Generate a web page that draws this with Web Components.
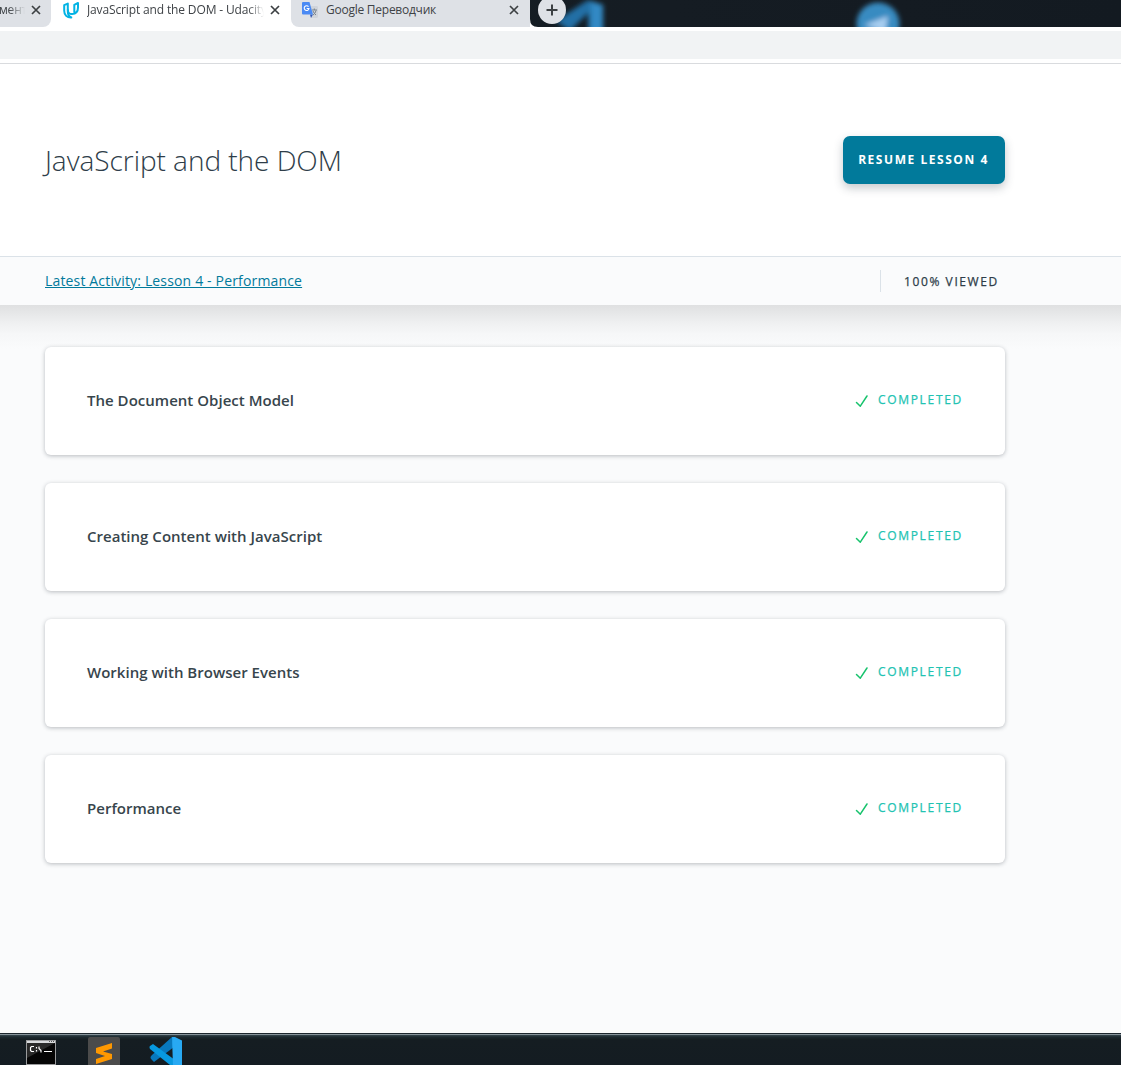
<!DOCTYPE html>
<html lang="en"><head><meta charset="utf-8"><title>JavaScript and the DOM - Udacity</title>
<style>html,body{margin:0;height:100%;overflow:hidden}body{font-family:"Open Sans","Noto Sans",sans-serif;color:#2e3d49}</style></head>
<body>
<desktop-window></desktop-window>
<script>
const define=(name,html)=>customElements.define(name,class extends HTMLElement{
  constructor(){super();this.attachShadow({mode:'open'}).innerHTML=html;}
});

define('browser-tab',`<style>
:host{display:flex;align-items:center;height:27px;box-sizing:border-box;background:#dee1e6;font-size:12px;line-height:20px;color:#3f4347;padding-bottom:7px}
:host([active]){background:#fff}
.icon{flex:none;width:16px;height:20px;display:flex;align-items:center;margin-right:8px}
:host([bare]) .icon{display:none}
.title{flex:1;min-width:0;overflow:hidden;white-space:nowrap;letter-spacing:var(--track,-.25px)}
:host([fade]) .title{-webkit-mask-image:linear-gradient(90deg,#000 calc(100% - 16px),transparent);mask-image:linear-gradient(90deg,#000 calc(100% - 16px),transparent)}
svg.x{flex:none;width:10px;height:10px;margin-left:6px}
</style><span class="icon"><slot name="icon"></slot></span><span class="title"><slot></slot></span>
<svg class="x" viewBox="0 0 10 10"><path d="M1 1l8 8M9 1l-8 8" stroke="#3c4043" stroke-width="1.7"/></svg>`);

define('tab-strip',`<style>
:host{display:flex;height:27px;overflow:hidden;background:linear-gradient(90deg,#141e24,#151c23 60%,#131a21)}
.tabs{display:flex;width:530px;background:#fff;flex:none}
.t1{width:51px;padding-right:10px;border-bottom-right-radius:8px;--track:-.2px}
.t2{width:240px;padding-left:12px;padding-right:11px}
.t3{width:239px;padding-left:11px;padding-right:11px;border-radius:0 0 0 8px}
.art{flex:1;height:27px;min-width:0}
svg{display:block;flex:none}
</style>
<div class="tabs">
<browser-tab class="t1" bare fade><span style="margin-left:-1px">мент</span></browser-tab>
<browser-tab class="t2" active fade style="--track:-.14px"><svg slot="icon" width="16" height="18" viewBox="0 0 16 18"><g fill="none" stroke="#02b3e4" stroke-width="2" stroke-linejoin="round" stroke-linecap="round"><path d="M4.800 10.500V2.600L1.200 4.200V9.800C1.200 14.200 4 16.700 8.300 16.500 6 15.500 4.800 13.500 4.800 10.500"/><path d="M4.800 9c.3 3 1.800 4.200 4.200 4.100 3.800-.2 6-2.600 6-6.500V2L11.300 3.800v7.500"/></g></svg>JavaScript and the DOM - Udacity</browser-tab>
<browser-tab class="t3"><svg slot="icon" width="16" height="16" viewBox="0 0 16 16"><path d="M6 4h9.300l.7.700V15l-1 1H9z" fill="#d0d4da"/><path d="M8 12.500h3L9 16z" fill="#3257b5"/><path d="M10 8h5M12.300 6.500V8M11 9c.6 1.800 1.700 3 3 4M14 8.500c-.6 2.200-1.500 3.500-3 4.500" stroke="#7a848d" stroke-width="1" fill="none"/><path d="M1 0h6.500L11 12.500H1q-1 0-1-1V1q0-1 1-1z" fill="#4a8af4"/><path d="M6.500 4.600A2.400 2.400 0 1 0 7 6.500H4.700" stroke="#fff" stroke-width="1.100" fill="none"/></svg>Google Переводчик</browser-tab>
</div>
<svg class="art" viewBox="530 0 591 27" width="591" height="27"><defs><filter id="b" x="-20%" y="-30%" width="140%" height="160%"><feGaussianBlur stdDeviation="2.5"/></filter></defs>
<path d="M530 19v8h8q-8 0-8-8" fill="#fff"/>
<g filter="url(#b)"><path d="M556 21L588 0l15 5v32h-15V13L570 31z" fill="#236fa6"/><path d="M591 1l12 4v32h-12z" fill="#3389c4"/><circle cx="878" cy="24" r="21.500" fill="#388bc1"/><path d="M864 25l24-9-3 18-8-5z" fill="#a8cef0"/></g>
<circle cx="552" cy="10" r="14" fill="#dee1e6"/><path d="M546.500 10h11M552 4.500v11" stroke="#3c4043" stroke-width="2"/></svg>`);

define('browser-bar',`<style>:host{display:block;box-sizing:border-box;height:37px;background:#f1f3f4;border-top:4px solid #fff;border-bottom:1px solid #d9dbde}
div{height:28px;border-bottom:4px solid #fff}</style><div></div>`);

define('resume-button',`<style>:host{display:block}button{all:unset;box-sizing:border-box;display:flex;align-items:center;justify-content:center;width:162px;height:48px;border-radius:7px;background:#017a9b;color:#fff;font-size:12px;font-weight:700;letter-spacing:1.550px;padding:0 1px 2px 0;white-space:nowrap;box-shadow:0 4px 10px rgba(46,61,73,.28)}</style><button><slot></slot></button>`);

define('course-header',`<style>
:host{display:block;background:#fafbfc}
.hero{height:192px;background:#fff;border-bottom:1px solid #dbe2e8;padding:0 116px 0 45px;display:flex;align-items:center;justify-content:space-between}
h1{font-size:28px;font-weight:300;line-height:40px;margin:0;letter-spacing:-.04px;white-space:nowrap}
.bar{height:48px;display:flex;align-items:center;justify-content:space-between;padding:0 116px 0 45px}
a{font-size:14px;line-height:24px;letter-spacing:.16px;color:#017a9b;text-decoration:underline;white-space:nowrap}
.v{width:125px;box-sizing:border-box;height:22px;border-left:1px solid #dbe2e8;padding-left:23px;font-size:12px;line-height:24px;letter-spacing:1.600px;white-space:nowrap;-webkit-text-stroke:.25px currentColor}
</style><div class="hero"><h1><slot></slot></h1><resume-button>RESUME LESSON 4</resume-button></div>
<div class="bar"><a><slot name="activity"></slot></a><div class="v"><slot name="progress"></slot></div></div>`);

define('lesson-card',`<style>
:host{display:flex;align-items:center;justify-content:space-between;box-sizing:border-box;height:108px;padding:0 42px 0 42px;background:#fff;border-radius:6px;box-shadow:0 1px 4px rgba(30,40,50,.3)}
.name{font-size:15px;line-height:24px;font-weight:600;color:#37454c;letter-spacing:.02px;padding-bottom:2px}
.done{display:flex;align-items:center;font-size:12px;line-height:24px;letter-spacing:1.700px;color:#22c3b2;-webkit-text-stroke:.25px currentColor;padding-bottom:3px}
svg{width:14px;height:14px;margin:3px 9px 0 0}
</style><span class="name"><slot></slot></span><span class="done"><svg viewBox="0 0 14 14"><path d="M1.500 8.500l3.800 3.700L12 2" fill="none" stroke="#18c36d" stroke-width="1.500" stroke-linecap="round" stroke-linejoin="round"/></svg><span>COMPLETED</span></span>`);

define('task-bar',`<style>
:host{display:flex;align-items:flex-start;box-sizing:border-box;height:32px;border-top:1px solid #1d272e;background:linear-gradient(#87949b 0 1px,#35464d 1px,#1d2a30 3px,#151d22 6px,#141c22);overflow:hidden}
svg{display:block;flex:none}
</style>
<svg width="30" height="26" viewBox="0 0 30 26" style="margin:6px 0 0 26px"><path fill="#9a9b9d" d="M0 0h30v26H0z"/><path fill="#d8dadc" d="M1 1h28v2H1z"/><path fill="#050505" d="M1 3h28v21H1z"/><path d="M1 3h28L1 18z" fill="#292929"/><path d="M23 1h1v1h-1zM25 1h1v1h-1zM27 1h1v1h-1z" fill="#555"/><path d="M8 6.500H5.500l-1 1v3l1 1H8M10.500 7v1.500M10.500 10v1.500M13 6.500v2l2 2v2M18 11.500h8" stroke="#fff" fill="none" stroke-width="1.200"/></svg>
<svg width="32" height="29" viewBox="0 0 32 29" style="margin:3px 0 0 32px"><rect width="32" height="32" rx="2" fill="#4b4b4b"/><path d="M8 11l16-5v5.500l-9 3 9 2.500v5L8 27v-5l9-3-9-3z" fill="#ff9800"/></svg>
<svg width="33" height="32" viewBox="0 0 33 32" style="margin:3px 0 0 29px"><path d="M23 0L3 18c-2 2-2 3 0 5l2 2L25 10z" fill="#0878bd"/><path d="M1 9l3-2L26 23v9L1 12q-1-2 0-3z" fill="#0798df"/><path d="M23 0h3l7 3.500V29h-9z" fill="#28a9f3"/></svg>`);

define('desktop-window',`<style>
:host{display:flex;flex-direction:column;height:1065px;width:1121px;overflow:hidden}
main{flex:1;min-height:0;background:#fafbfc;overflow:hidden;display:flex;flex-direction:column}
.lessons{display:flex;flex-direction:column;gap:28px;flex:1;padding:42px 116px 0 45px;background:linear-gradient(#dfe0e1,#e7e8e9 9px,#eff0f1 18px,#f6f7f8 29px,#fafbfc 44px)}
</style><tab-strip></tab-strip><browser-bar></browser-bar><main>
<course-header>JavaScript and the DOM<span slot="activity">Latest Activity: Lesson 4 - Performance</span><span slot="progress">100% VIEWED</span></course-header>
<div class="lessons"><lesson-card>The Document Object Model</lesson-card><lesson-card>Creating Content with JavaScript</lesson-card><lesson-card>Working with Browser Events</lesson-card><lesson-card>Performance</lesson-card></div>
</main><task-bar></task-bar>`);
</script></body></html>
